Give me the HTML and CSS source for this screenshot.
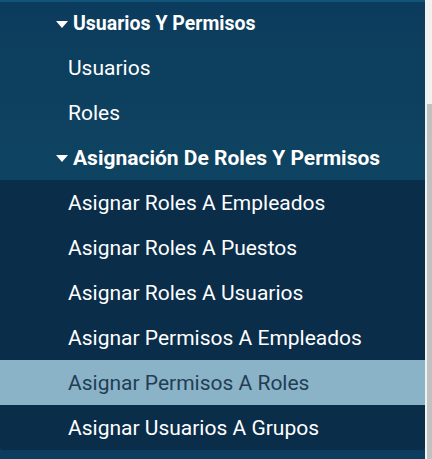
FILE: index.html
```html
<!DOCTYPE html>
<html lang="es">
<head>
<meta charset="utf-8">
<title>Menú</title>
<link rel="stylesheet" href="styles.css">
</head>
<body>
<div class="frame">
  <nav class="panel">
    <div class="group">
      <div class="heading first"><span class="caret"></span>Usuarios Y Permisos</div>
      <a class="item">Usuarios</a>
      <a class="item">Roles</a>
      <div class="heading second"><span class="caret"></span>Asignación De Roles Y Permisos</div>
    </div>
    <div class="sub">
      <a class="item">Asignar Roles A Empleados</a>
      <a class="item">Asignar Roles A Puestos</a>
      <a class="item">Asignar Roles A Usuarios</a>
      <a class="item">Asignar Permisos A Empleados</a>
      <a class="item active">Asignar Permisos A Roles</a>
      <a class="item">Asignar Usuarios A Grupos</a>
    </div>
    <div class="rest"></div>
  </nav>
  <div class="scrollbar"><div class="thumb"></div></div>
</div>
</body>
</html>
```
FILE: styles.css
```css
html, body {
  margin: 0;
  padding: 0;
  width: 432px;
  height: 459px;
  overflow: hidden;
  font-family: Roboto, "Liberation Sans", sans-serif;
}
.frame {
  display: flex;
  width: 432px;
  height: 459px;
}
.panel {
  flex: 1;
  display: flex;
  flex-direction: column;
  background: #0c3e5f;
  border-top: 2px solid #11567a;
  box-sizing: border-box;
}
.group {
  background: linear-gradient(#0c3c5d, #0e4461);
  display: flex;
  flex-direction: column;
}
.heading {
  height: 45px;
  display: flex;
  align-items: center;
  padding-left: 56px;
  color: #ffffff;
  font-weight: 700;
  font-size: 19.5px;
}
.heading.first {
  height: 43px;
}
.heading.second {
  font-size: 21px;
}
.caret {
  width: 0;
  height: 0;
  border-left: 6px solid transparent;
  border-right: 6px solid transparent;
  border-top: 7px solid #ffffff;
  margin-right: 5px;
  margin-top: 2px;
}
.item {
  height: 45px;
  display: flex;
  align-items: center;
  padding-left: 68px;
  color: #ffffff;
  font-size: 21px;
}
.sub {
  background: #0a2d4a;
  border-radius: 0 0 3px 3px;
  display: flex;
  flex-direction: column;
}
.item.active {
  background: #8ab3c8;
  color: #213e55;
}
.rest {
  flex: 1;
  background: #0c3d5e;
}
.scrollbar {
  width: 7px;
  background: #f1f1f1;
  display: flex;
  flex-direction: column;
  align-items: flex-end;
  padding-top: 104px;
  box-sizing: border-box;
}
.thumb {
  width: 5px;
  flex: 1;
  background: #c1c1c1;
}
```
